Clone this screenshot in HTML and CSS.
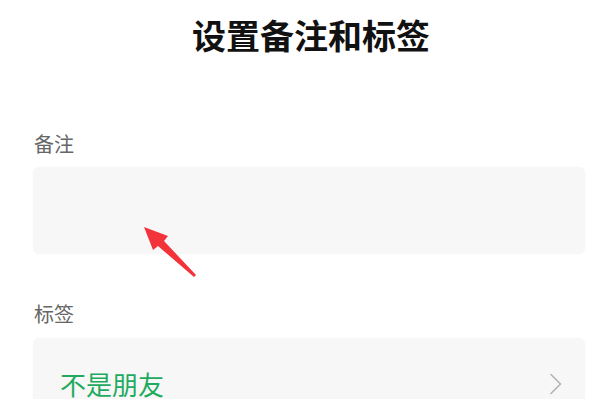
FILE: index.html
```html
<!DOCTYPE html>
<html lang="zh-CN">
<head>
<meta charset="utf-8">
<title>设置备注和标签</title>
<link rel="stylesheet" href="styles.css">
</head>
<body>
<div class="page">
  <h1 class="title">设置备注和标签</h1>
  <section class="section section-remark">
    <div class="label">备注</div>
    <div class="field field-input"></div>
  </section>
  <section class="section section-tag">
    <div class="label">标签</div>
    <div class="field field-tag">
      <span class="tag-text">不是朋友</span>
      <svg class="chevron" width="14" height="22" viewBox="0 0 14 22"><path d="M2 1.5 L11.5 11 L2 20.5" fill="none" stroke="#b3b3b3" stroke-width="1.6" stroke-linecap="round" stroke-linejoin="round"/></svg>
    </div>
  </section>
  <svg class="arrow" width="60" height="60" viewBox="0 0 60 60"><polygon points="4,5 28,14 24,19 56,53 54,55 18,24 13,28" fill="#f2333a"/></svg>
</div>
</body>
</html>
```
FILE: styles.css
```css
html, body {
  margin: 0;
  padding: 0;
  background: #ffffff;
}
body {
  font-family: "Noto Sans CJK SC", "Noto Sans", sans-serif;
  width: 598px;
  height: 399px;
  overflow: hidden;
}
.page {
  position: relative;
  padding: 0 13px 0 33px;
}
.title {
  margin: 0;
  padding-top: 18px;
  font-size: 34px;
  line-height: 34px;
  font-weight: 700;
  color: #111111;
  text-align: center;
  padding-left: 4px;
}
.section-remark {
  margin-top: 82px;
}
.section-tag {
  margin-top: 50px;
}
.label {
  font-size: 20px;
  line-height: 20px;
  color: #666666;
  padding-left: 1px;
}
.field {
  margin-top: 13px;
  background: #f7f7f7;
  border-radius: 6px;
  box-shadow: 0 0 2px rgba(0,0,0,0.03);
}
.field-input {
  height: 87px;
}
.field-tag {
  margin-top: 14px;
  height: 100px;
  display: flex;
  align-items: flex-start;
  justify-content: space-between;
  padding: 33px 22px 0 27px;
  box-sizing: border-box;
}
.tag-text {
  font-size: 26px;
  line-height: 26px;
  color: #1fab5f;
}
.chevron {
  margin-top: 2px;
}
.arrow {
  position: absolute;
  left: 140px;
  top: 222px;
}
```
